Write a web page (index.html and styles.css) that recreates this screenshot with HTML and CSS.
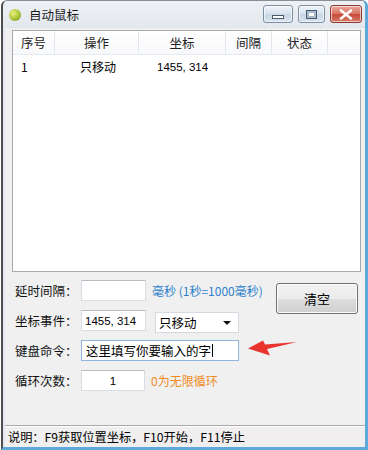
FILE: index.html
```html
<!DOCTYPE html>
<html lang="zh-CN">
<head>
<meta charset="utf-8">
<link rel="stylesheet" href="styles.css">
</head>
<body>
<div class="window">
  <div class="titlebar">
    <span class="app-icon"></span>
    <span class="title">自动鼠标</span>
    <div class="controls">
      <span class="cbtn min"><span class="min-glyph"></span></span>
      <span class="cbtn max"><span class="max-glyph"></span></span>
      <span class="cbtn close">
        <svg width="14" height="11" viewBox="0 0 14 11"><path d="M2 1.5 L12 9.5 M12 1.5 L2 9.5" stroke="#fff" stroke-width="2.6" stroke-linecap="round"/></svg>
      </span>
    </div>
  </div>
  <div class="client">
    <div class="listview">
      <div class="lv-header">
        <div class="col c1 left">序号</div>
        <div class="col c2">操作</div>
        <div class="col c3">坐标</div>
        <div class="col c4">间隔</div>
        <div class="col c5">状态</div>
        <div class="col c6"></div>
      </div>
      <div class="lv-row">
        <div class="cell c1">1</div>
        <div class="cell c2 op">只移动</div>
        <div class="cell c3 coord">1455, 314</div>
      </div>
    </div>

    <div class="form">
      <div class="fields">
        <div class="frow">
          <span class="label">延时间隔：</span>
          <span class="input w65"></span>
          <span class="hint blue">毫秒 (1秒=1000毫秒)</span>
        </div>
        <div class="frow">
          <span class="label">坐标事件：</span>
          <span class="input w65 mono">1455, 314</span>
          <span class="combo">只移动<span class="arrow"></span></span>
        </div>
        <div class="frow">
          <span class="label">键盘命令：</span>
          <span class="input w158 focus">这里填写你要输入的字<span class="caret"></span></span>
          <svg class="red-arrow" width="50" height="17" viewBox="0 0 50 17">
            <path d="M0 9.5 L15 1.5 L17 5.5 L49 3 L19 10 L22 16.5 Z" fill="#e8342c"/>
          </svg>
        </div>
        <div class="frow">
          <span class="label">循环次数：</span>
          <span class="input w64 center mono">1</span>
          <span class="hint orange">0为无限循环</span>
        </div>
      </div>
      <div class="side">
        <span class="button">清空</span>
      </div>
    </div>

    <div class="statusbar">说明：F9获取位置坐标，F10开始，F11停止</div>
  </div>
</div>
</body>
</html>
```

FILE: styles.css
```css
* { box-sizing: border-box; }
html, body {
  margin: 0;
  padding: 0;
  background: #ffffff;
}
body {
  font-family: "Noto Sans CJK SC", "Noto Sans", sans-serif;
  font-size: 12px;
  color: #000;
}
.window {
  width: 367px;
  height: 450px;
  display: flex;
  flex-direction: column;
  border-left: 2px solid #4d4d4d;
  border-right: 3px solid #5da9db;
  border-bottom: 3px solid #5da9db;
  border-top: 1px solid #8a8f96;
  border-radius: 6px 6px 0 0;
  background: linear-gradient(#edf0f4, #e3e8ee 28px);
  margin-left: 1px;
}
.titlebar {
  height: 26px;
  display: flex;
  align-items: center;
  padding-left: 6px;
  flex: none;
}
.app-icon {
  width: 12px;
  height: 12px;
  border-radius: 50%;
  background: radial-gradient(circle at 35% 35%, #eaf27a, #a9c23a 55%, #6f8a1e);
  margin-right: 8px;
  margin-top: 2px;
}
.title {
  font-size: 12.5px;
  color: #1a1a1a;
  margin-top: 1px;
}
.controls {
  margin-left: auto;
  display: flex;
  gap: 5px;
  margin-right: 3px;
  margin-top: 4px;
  align-self: flex-start;
}
.cbtn {
  height: 18px;
  border: 1px solid #7d8ea3;
  border-radius: 3px;
  display: flex;
  align-items: center;
  justify-content: center;
  background: linear-gradient(#eef3f8, #d7e2ee 50%, #c8d6e6 51%, #d8e3ef);
  box-shadow: inset 0 0 0 1px rgba(255,255,255,0.6);
}
.min { width: 30px; }
.max { width: 27px; }
.close {
  width: 32px;
  border-color: #8a3a30;
  background: linear-gradient(#eaa99c, #d87262 50%, #c8493a 51%, #d77a68);
}
.min-glyph {
  width: 12px;
  height: 4px;
  margin-top: 6px;
  border: 1px solid #4a596c;
  background: #fff;
}
.max-glyph {
  width: 11px;
  height: 9px;
  border: 1px solid #4a596c;
  background: #fff;
  box-shadow: inset 0 0 0 2px #a9bacd;
}
.client {
  flex: 1;
  background: #f0f0f0;
  margin: 0 0 0 2px;
  border-top: 1px solid #dfe4ea;
  display: flex;
  flex-direction: column;
  padding: 2px 2px 0 7px;
}
.listview {
  width: 349px;
  height: 242px;
  border: 1px solid #a5a9b0;
  background: #fff;
  flex: none;
}
.lv-header {
  display: flex;
  height: 24px;
  border-bottom: 1px solid #e6e9ee;
  background: linear-gradient(#ffffff, #f7f8fa);
}
.col {
  border-right: 1px solid #e3e7ec;
  display: flex;
  align-items: center;
  justify-content: center;
  font-size: 12.5px;
  color: #222;
}
.col.left { justify-content: flex-start; padding-left: 8px; }
.c1 { width: 42px; }
.c2 { width: 84px; }
.c3 { width: 87px; }
.c4 { width: 46px; }
.c5 { width: 56px; }
.c6 { width: 31px; border-right: none; }
.lv-row {
  display: flex;
  height: 17px;
  align-items: center;
  margin-top: 3px;
}
.cell { padding-left: 8px; font-size: 12px; }
.cell.op { padding-left: 25px; }
.cell.coord { padding-left: 18px; font-family: "Liberation Sans", sans-serif; font-size: 11.5px; }
.form {
  display: flex;
  margin-top: 8px;
  flex: none;
}
.fields {
  display: flex;
  flex-direction: column;
  gap: 9px;
  width: 254px;
  flex: none;
}
.frow {
  display: flex;
  align-items: center;
  height: 21px;
}
.label {
  width: 69px;
  padding-left: 3px;
  font-size: 12.5px;
  color: #111;
  flex: none;
}
.input {
  height: 21px;
  background: #fff;
  border: 1px solid #d9dde3;
  border-top-color: #b8bdc4;
  display: flex;
  align-items: center;
  padding-left: 3px;
  flex: none;
}
.w65 { width: 65px; }
.w64 { width: 64px; }
.w158 { width: 158px; }
.mono { font-family: "Liberation Sans", sans-serif; font-size: 11.5px; }
.center { justify-content: center; padding-left: 0; }
.focus { border-color: #8fb6dd; font-size: 12.5px; padding-left: 4px; }
.caret {
  display: inline-block;
  width: 1px;
  height: 13px;
  background: #000;
  margin-left: 1px;
}
.hint { margin-left: 6px; font-size: 12px; white-space: nowrap; }
.blue { color: #2f7fcc; }
.orange { color: #ef8a22; }
.combo {
  margin-left: 9px;
  width: 84px;
  height: 21px;
  background: #fff;
  border: 1px solid #d6dae0;
  display: flex;
  align-items: center;
  padding-left: 3px;
  font-size: 12.5px;
  margin-top: 3px;
  flex: none;
}
.arrow {
  margin-left: auto;
  margin-right: 7px;
  width: 0;
  height: 0;
  border-left: 4px solid transparent;
  border-right: 4px solid transparent;
  border-top: 4px solid #111;
  margin-top: 2px;
}
.red-arrow { margin-left: 9px; margin-top: -7px; flex: none; }
.side {
  flex: 1;
  display: flex;
  align-items: flex-start;
  padding-left: 10px;
}
.button {
  margin-top: 3px;
  width: 82px;
  height: 31px;
  border: 1px solid #707070;
  border-radius: 3px;
  background: linear-gradient(#f2f2f2, #ebebeb 50%, #dddddd 51%, #cfcfcf);
  box-shadow: inset 0 0 0 1px #fcfcfc;
  display: flex;
  align-items: center;
  justify-content: center;
  font-size: 13px;
}
.statusbar {
  margin-top: auto;
  margin-left: -7px;
  margin-right: -2px;
  height: 22px;
  border-top: 1px solid #a9a9a9;
  box-shadow: inset 0 1px 0 #ffffff;
  background: #f0eeee;
  display: flex;
  align-items: center;
  padding-left: 3px;
  font-size: 12.2px;
}
```
